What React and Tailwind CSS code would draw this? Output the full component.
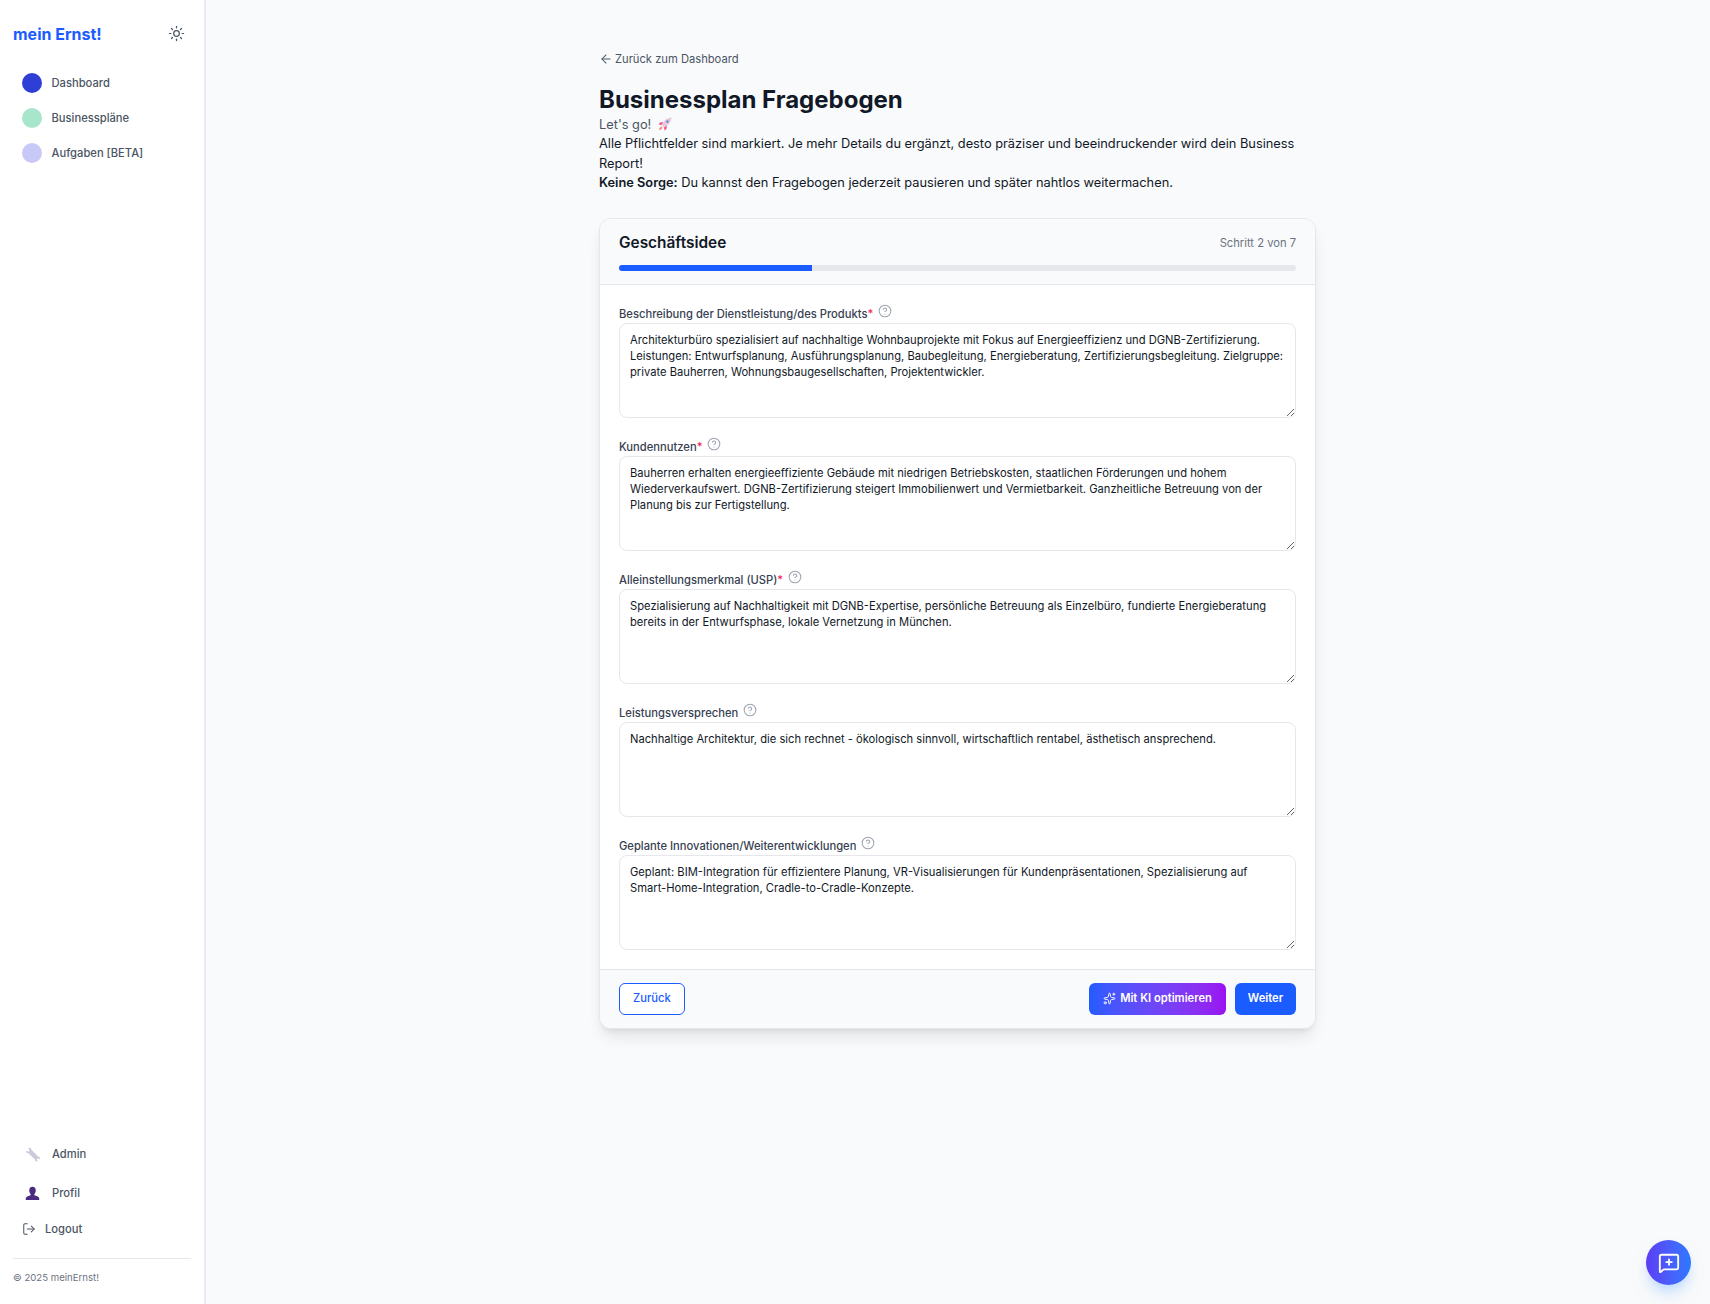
import { ArrowLeft, CircleHelp, LogOut, MessageSquarePlus, Sparkles, Sun } from 'lucide-react';

const NAV_ITEMS = [
  { label: 'Dashboard', color: 'bg-[#2f3fd6]' },
  { label: 'Businesspläne', color: 'bg-[#a8e6cb]' },
  { label: 'Aufgaben [BETA]', color: 'bg-[#c9c9f7]' },
];

const FIELDS = [
  {
    label: 'Beschreibung der Dienstleistung/des Produkts',
    required: true,
    value:
      'Architekturbüro spezialisiert auf nachhaltige Wohnbauprojekte mit Fokus auf Energieeffizienz und DGNB-Zertifizierung. Leistungen: Entwurfsplanung, Ausführungsplanung, Baubegleitung, Energieberatung, Zertifizierungsbegleitung. Zielgruppe: private Bauherren, Wohnungsbaugesellschaften, Projektentwickler.',
  },
  {
    label: 'Kundennutzen',
    required: true,
    value:
      'Bauherren erhalten energieeffiziente Gebäude mit niedrigen Betriebskosten, staatlichen Förderungen und hohem Wiederverkaufswert. DGNB-Zertifizierung steigert Immobilienwert und Vermietbarkeit. Ganzheitliche Betreuung von der Planung bis zur Fertigstellung.',
  },
  {
    label: 'Alleinstellungsmerkmal (USP)',
    required: true,
    value:
      'Spezialisierung auf Nachhaltigkeit mit DGNB-Expertise, persönliche Betreuung als Einzelbüro, fundierte Energieberatung bereits in der Entwurfsphase, lokale Vernetzung in München.',
  },
  {
    label: 'Leistungsversprechen',
    value:
      'Nachhaltige Architektur, die sich rechnet - ökologisch sinnvoll, wirtschaftlich rentabel, ästhetisch ansprechend.',
  },
  {
    label: 'Geplante Innovationen/Weiterentwicklungen',
    value:
      'Geplant: BIM-Integration für effizientere Planung, VR-Visualisierungen für Kundenpräsentationen, Spezialisierung auf Smart-Home-Integration, Cradle-to-Cradle-Konzepte.',
  },
];

function RocketIcon() {
  return (
    <svg viewBox="0 0 16 16" className="inline-block w-4 h-4 ml-0.5 align-[-3px]">
      <path d="M14.5 1.5c-3.5.2-6 1.6-8 4.6L4.6 9l2.4 2.4 2.9-1.900c3-2 4.400-4.500 4.600-8z" fill="#e8c8dc" />
      <path d="M6.100 6.100 3 6.600 1.600 8.400l3 .6zM9.900 9.500 9.400 13l-1.800 1.400-.6-3z" fill="#f0508c" />
      <circle cx="10.400" cy="5.600" r="1.300" fill="#6b8fd8" />
      <path d="M4.600 10.600c-1.300.3-2.300 1.600-2.600 3.400 1.800-.3 3.100-1.300 3.400-2.600z" fill="#f58a5c" />
    </svg>
  );
}

function WrenchIcon() {
  return (
    <svg viewBox="0 0 16 16" className="w-[15px] h-[15px]">
      <path d="M1.2 3.6 3.4 5 5 3.6 3.4 1.3C5-.1 6.8 1 6.9 3l7.4 7.4c1.4-.2 2 .8 1.4 2.6l-1.9-1-1.3 1.2 1.1 2c-1.9.5-3-.3-2.8-1.7L3.4 6.3C1.8 6.4.7 5.4 1.2 3.6z" fill="#cfc9dc" />
    </svg>
  );
}

function BustIcon() {
  return (
    <svg viewBox="0 0 16 16" className="w-[15px] h-[15px]">
      <path d="M8 .8c2.3 0 3.5 1.7 3.5 3.9 0 1.6-.7 3-1.5 3.8v1.3c1.9.7 4.6 1.4 5 2.6.2.7.2 1.6.2 2.6H.8c0-1 0-1.9.2-2.6.4-1.2 3.1-1.9 5-2.6V8.500C5.200 7.700 4.500 6.300 4.500 4.700 4.500 2.500 5.700.8 8 .8z" fill="#4b2a82" />
    </svg>
  );
}

function Sidebar() {
  return (
    <aside className="w-[206px] shrink-0 min-h-[1304px] bg-white border-r-2 border-[#e9eaf0] flex flex-col">
      <div className="flex items-center justify-between pl-[13px] pr-[19px] pt-[11px] h-[56px]">
        <span className="text-[#1a5cff] text-base leading-6 font-bold">mein Ernst!</span>
        <Sun className="w-[17px] h-[17px] text-[#4b5563]" strokeWidth={1.75} />
      </div>
      <nav className="flex flex-col gap-[15px] pl-[22px] mt-[17px]">
        {NAV_ITEMS.map((item) => (
          <div key={item.label} className="flex items-center gap-[9.5px] h-[20px]">
            <span className={`w-5 h-5 rounded-full ${item.color}`} />
            <span className="text-[11.2px] text-[#4b5563] font-medium">{item.label}</span>
          </div>
        ))}
      </nav>
      <div className="mt-auto px-[13px] pb-[18px]">
        <div className="flex items-center gap-[12px] pl-[12px] h-[20px]">
          <WrenchIcon />
          <span className="text-[11.2px] text-[#4b5563] font-medium">Admin</span>
        </div>
        <div className="flex items-center gap-[12px] pl-[12px] h-[20px] mt-[19px]">
          <BustIcon />
          <span className="text-[11.2px] text-[#4b5563] font-medium">Profil</span>
        </div>
        <div className="flex items-center gap-[9px] pl-[9px] h-[20px] mt-[16px]">
          <LogOut className="w-[14px] h-[14px] text-[#4b5563]" strokeWidth={1.75} />
          <span className="text-[11.2px] text-[#4b5563] font-medium">Logout</span>
        </div>
        <div className="border-t border-[#e5e7eb] mt-[19px] pt-[11px] text-[9.6px] leading-4 text-[#6b7280]">
          © 2025 meinErnst!
        </div>
      </div>
    </aside>
  );
}

function Field({ field }) {
  return (
    <div>
      <div className="flex items-center h-4">
        <label className="text-[11.2px] text-[#374151] font-medium">
          {field.label}
          {field.required && <span className="text-[#f0265c]">*</span>}
        </label>
        <CircleHelp className="w-[14px] h-[14px] ml-[5px] -mt-[7px] text-[#9ca3af]" strokeWidth={1.75} />
      </div>
      <textarea
        readOnly
        value={field.value}
        className="block w-full h-[95px] rounded-lg border border-[#e5e7eb] bg-white px-[10px] py-[8px] text-[11.2px] leading-4 text-[#111827] outline-none"
      />
    </div>
  );
}

export default function App() {
  return (
    <div className="flex min-h-[1304px] bg-[#f9fafb] font-['Inter',sans-serif]">
      <Sidebar />
      <main className="flex-1 flex justify-center relative pr-[1px]">
        <div className="w-[717px] pt-[51px]">
          <a className="flex items-center gap-[2px] text-[11.2px] leading-4 text-[#4b5563]">
            <ArrowLeft className="w-[14px] h-[14px]" strokeWidth={1.75} />
            Zurück zum Dashboard
          </a>
          <h1 className="text-2xl leading-8 font-bold text-[#111827] mt-[17px]">Businessplan Fragebogen</h1>
          <p className="text-[12.8px] leading-[18px] text-[#4b5563]">
            Let's go! <RocketIcon />
          </p>
          <p className="text-[12.8px] leading-[19.5px] text-[#111827] pr-[10px]">
            Alle Pflichtfelder sind markiert. Je mehr Details du ergänzt, desto präziser und beeindruckender wird dein Business Report!
          </p>
          <p className="text-[12.8px] leading-[19.5px] text-[#111827]">
            <strong className="font-semibold">Keine Sorge:</strong> Du kannst den Fragebogen jederzeit pausieren und später nahtlos weitermachen.
          </p>
          <section className="mt-[25px] rounded-xl border border-[#e5e7eb] bg-white shadow-lg overflow-hidden">
            <header className="h-[66px] px-[19px] pt-[12px] bg-[#f9fafb] border-b border-[#e5e7eb]">
              <div className="flex items-center justify-between h-6">
                <h2 className="text-[15.4px] font-semibold text-[#111827]">Geschäftsidee</h2>
                <span className="text-[11.2px] text-[#6b7280] mt-[1px]">Schritt 2 von 7</span>
              </div>
              <div className="h-1.5 mt-[10px] rounded-full bg-[#e5e7eb] overflow-hidden">
                <div className="h-full w-[28.5%] bg-[#1a5cff]" />
              </div>
            </header>
            <div className="flex flex-col gap-[22px] px-[19px] pt-[22px] pb-[19px]">
              {FIELDS.map((field) => (
                <Field key={field.label} field={field} />
              ))}
            </div>
            <footer className="h-[59px] px-[19px] flex items-center justify-between bg-[#f9fafb] border-t border-[#e5e7eb]">
              <button className="h-8 px-[13px] rounded-md border border-[#1a5cff] text-[11.2px] font-medium text-[#1a5cff] bg-white">
                Zurück
              </button>
              <div className="flex items-center gap-[9px]">
                <button className="h-8 w-[137px] rounded-md flex items-center justify-center gap-1 text-[11.2px] font-semibold text-white bg-gradient-to-r from-[#1f5cff] to-[#9a10f0]">
                  <Sparkles className="w-[13px] h-[13px]" strokeWidth={1.75} />
                  Mit KI optimieren
                </button>
                <button className="h-8 w-[61px] rounded-md text-[11.2px] font-semibold text-white bg-[#1a5cff]">Weiter</button>
              </div>
            </footer>
          </section>
        </div>
        <button className="absolute right-[19px] bottom-[19px] w-[45px] h-[45px] rounded-full flex items-center justify-center text-white bg-gradient-to-r from-[#5a3cf5] to-[#2a78ff] shadow-lg shadow-blue-200">
          <MessageSquarePlus className="w-[22px] h-[22px]" strokeWidth={2} />
        </button>
      </main>
    </div>
  );
}
